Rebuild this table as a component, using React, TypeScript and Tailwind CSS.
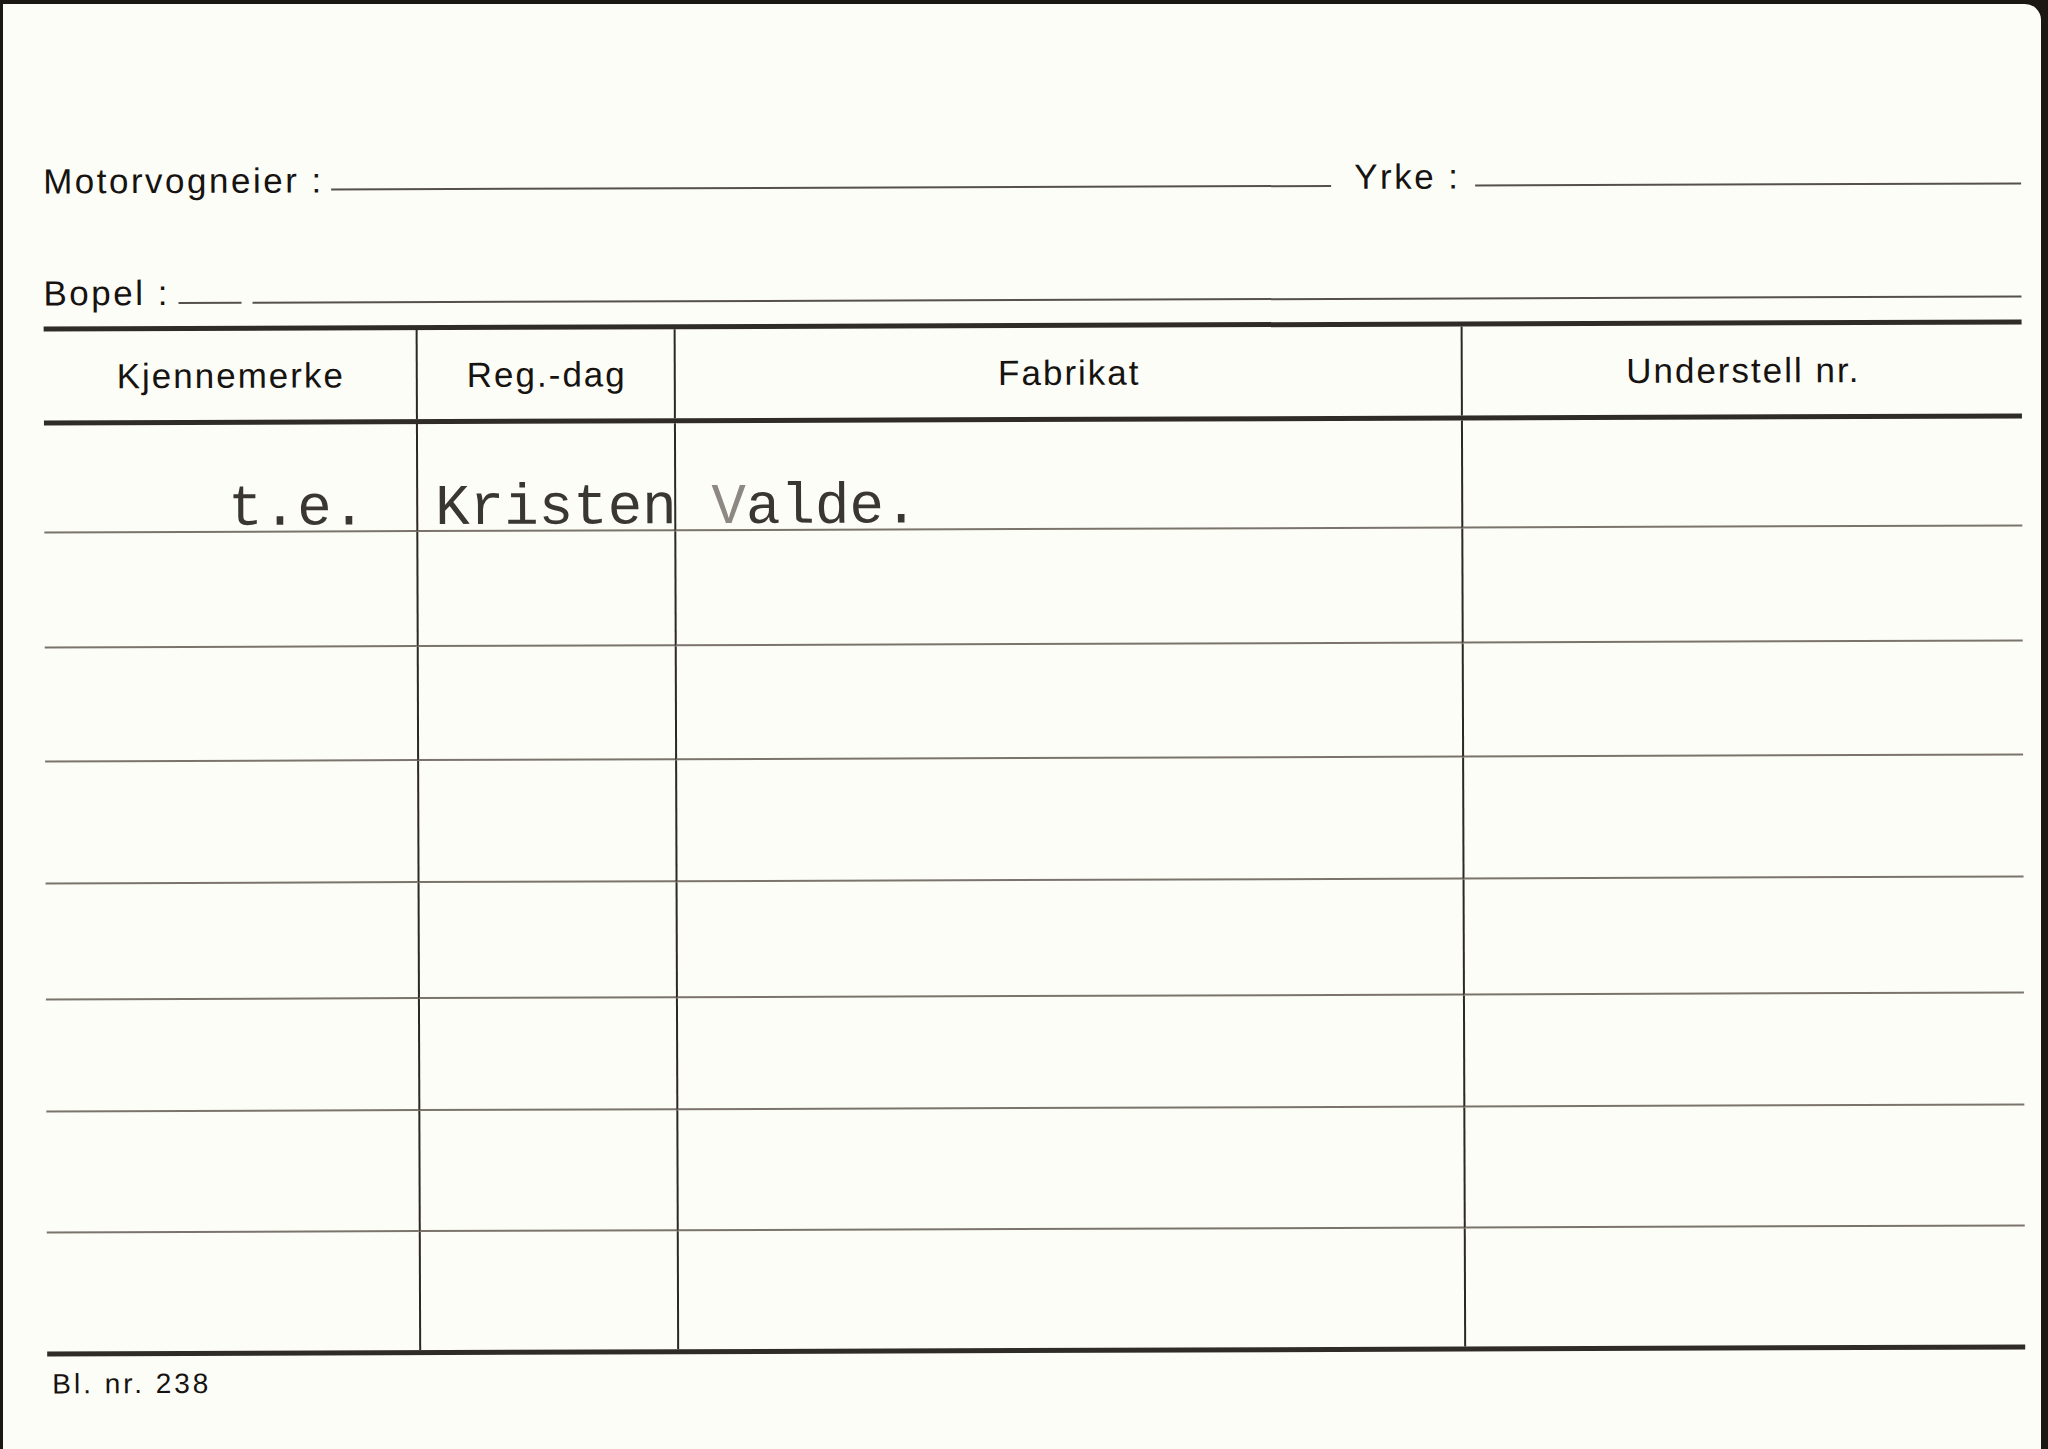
import React from 'react'

const rowHeights = [106, 113, 112, 120, 114, 110, 119, 118]

const ThinRule = ({ className = '' }: { className?: string }) => (
    <div className={`border-b-2 border-[#55504a] ${className}`} />
)

const ThickRule = () => <div className="h-[5px] bg-[#2f2b27]" />

const HeaderCell = ({ label, first }: { label: string, first?: boolean }) => (
    <div className={`flex items-center justify-center ${first ? '' : 'border-l-2 border-[#2c2824]'}`}>
        <span className="pl-[2px]">{label}</span>
    </div>
)

const App: React.FC = () => {
    return (
        <div className="w-[2048px] h-[1449px] overflow-hidden bg-[#1b1814] pt-[4px] pl-[3px] pr-[7px]">
            <div className="h-full bg-[#fdfdf8] rounded-tr-[16px]">
                <div className="h-full pl-[42px] pr-[18px] pt-[156px] text-[#161310] font-['Liberation_Sans',Arial,sans-serif] -rotate-[0.2deg]">
                    {/* owner / profession */}
                    <div className="flex items-end h-[35px] text-[35px] leading-none tracking-[2.5px]">
                        <div className="flex items-end w-[1311px]">
                            <span>Motorvogneier :</span>
                            <ThinRule className="flex-1 ml-[7px] mr-[23px] mb-[7px]" />
                        </div>
                        <div className="flex items-end flex-1">
                            <span>Yrke :</span>
                            <ThinRule className="flex-1 ml-[15px] mb-[7px]" />
                        </div>
                    </div>

                    {/* address */}
                    <div className="flex items-end h-[35px] mt-[77px] text-[35px] leading-none tracking-[2.5px]">
                        <span>Bopel :</span>
                        <ThinRule className="w-[63px] ml-[9px] mb-[6px]" />
                        <ThinRule className="flex-1 ml-[11px] mb-[6px]" />
                    </div>

                    {/* register table */}
                    <div className="mt-[16px]">
                        <ThickRule />
                        <div className="grid grid-cols-[372px_258px_787px_1fr] h-[89px] text-[35px] leading-none tracking-[2px]">
                            <HeaderCell label="Kjennemerke" first />
                            <HeaderCell label="Reg.-dag" />
                            <HeaderCell label="Fabrikat" />
                            <HeaderCell label="Understell nr." />
                        </div>
                        <ThickRule />
                        {rowHeights.map((h, i) => {
                            const last = i === rowHeights.length - 1
                            const line = last ? '' : 'border-b-2 border-b-[#7b746c]'
                            return (
                                <div key={i} className="grid grid-cols-[372px_258px_787px_1fr]" style={{ height: last ? h : h + 2 }}>
                                    <div className={`${line} relative`}>
                                        {i === 0 && (
                                            <div className="absolute left-[184px] top-[56px] z-10 whitespace-pre text-[57.5px] leading-none text-[#3a3632] font-['Liberation_Mono','Courier_New',monospace]">
                                                t.e.  Kristen <span className="text-[#8e8882]">V</span>alde.
                                            </div>
                                        )}
                                    </div>
                                    <div className={`${line} border-l-2 border-l-[#2c2824]`} />
                                    <div className={`${line} border-l-2 border-l-[#2c2824]`} />
                                    <div className={`${line} border-l-2 border-l-[#2c2824]`} />
                                </div>
                            )
                        })}
                        <ThickRule />
                    </div>

                    <p className="mt-[14px] ml-[5px] text-[28px] leading-none tracking-[3px]">Bl. nr. 238</p>
                </div>
            </div>
        </div>
    )
}

export default App
